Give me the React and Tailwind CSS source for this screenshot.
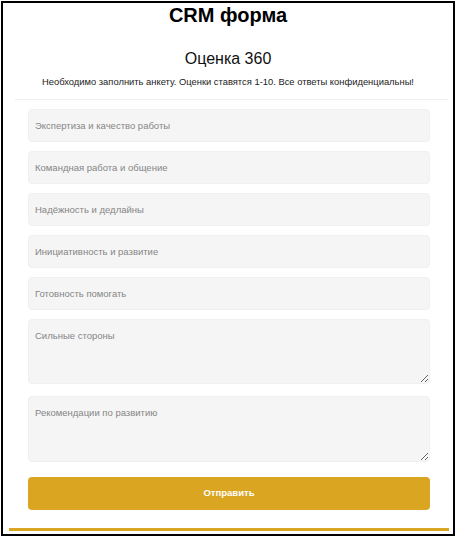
export default function App() {
  const inputs = [
    "Экспертиза и качество работы",
    "Командная работа и общение",
    "Надёжность и дедлайны",
    "Инициативность и развитие",
    "Готовность помогать",
  ];
  return (
    <div className="w-[457px] h-[539px] bg-white pt-px pl-px" style={{ fontFamily: '"Liberation Sans", Arial, sans-serif' }}>
      <div className="w-[454px] h-[535px] border-2 border-black flex flex-col">
        <h1 className="text-center text-[20px] leading-6 font-bold text-black">CRM форма</h1>
        <h2 className="mt-[22px] text-center text-[16px] leading-5 text-[#111]">Оценка 360</h2>
        <p className="mt-[6px] text-center text-[9.4px] leading-[14px] text-[#222]">
          Необходимо заполнить анкету. Оценки ставятся 1-10. Все ответы конфиденциальны!
        </p>
        <div className="mt-[10px] ml-[12px] w-[433px] h-px bg-[#eeeeee]" />
        <div className="ml-[25px] w-[402px] flex flex-col">
          {inputs.map((p, i) => (
            <input
              key={i}
              placeholder={p}
              className="mt-[9px] block w-full h-[33px] px-[6px] rounded-[4px] bg-[#f5f5f5] text-[9.5px] text-[#333] placeholder:text-[#858585] outline-none border border-[#f0f0f0]"
            />
          ))}
          <textarea
            placeholder="Сильные стороны"
            className="mt-[9px] block w-full h-[65px] px-[6px] py-[10px] rounded-[4px] bg-[#f5f5f5] text-[9.5px] leading-[12px] text-[#333] placeholder:text-[#858585] outline-none border border-[#f0f0f0]"
          />
          <textarea
            placeholder="Рекомендации по развитию"
            className="mt-[12px] block w-full h-[66px] px-[6px] py-[10px] rounded-[4px] bg-[#f5f5f5] text-[9.5px] leading-[12px] text-[#333] placeholder:text-[#858585] outline-none border border-[#f0f0f0]"
          />
          <button className="mt-[15px] w-full h-[33px] rounded-[4px] bg-[#daa520] text-white text-[9.5px] font-bold">
            Отправить
          </button>
        </div>
        <div className="mt-[18px] ml-[6px] w-[440px] h-[3px] bg-[#daa520]" />
      </div>
    </div>
  );
}
